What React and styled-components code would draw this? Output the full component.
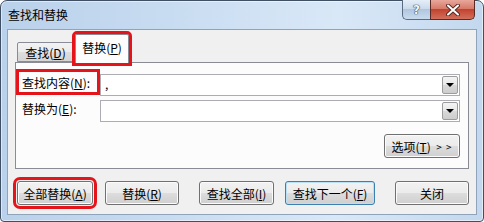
import React from "react";
import { styled, createGlobalStyle } from "styled-components";

const GlobalStyle = createGlobalStyle`
  html, body {
    margin: 0;
    width: 484px;
    height: 222px;
    overflow: hidden;
    background: #fff;
  }
  body {
    font-family: "Noto Sans CJK SC", "Microsoft YaHei", sans-serif;
    font-size: 12px;
    color: #000;
  }
  * { box-sizing: border-box; }
`;

export default function App() {
  return (
    <>
      <GlobalStyle />
      <Window>
        <TitleBar>
          <Title>查找和替换</Title>
          <Captions>
            <HelpButton>?</HelpButton>
            <CloseButton>
              <svg width="14" height="12" viewBox="0 0 14 12">
                <path d="M2 1.5 L12 10.5 M12 1.5 L2 10.5" stroke="#5a2a24" strokeWidth="4" strokeLinecap="round" />
                <path d="M2 1.5 L12 10.5 M12 1.5 L2 10.5" stroke="#fff" strokeWidth="2" strokeLinecap="round" />
              </svg>
            </CloseButton>
          </Captions>
        </TitleBar>

        <Client>
          <TabStrip>
            <Tab>查找(<u>D</u>)</Tab>
            <Tab $active $marked>替换(<u>P</u>)</Tab>
          </TabStrip>

          <Panel>
            <FieldRow>
              <Label $marked>查找内容(<u>N</u>):</Label>
              <Combo>
                <ComboText>,</ComboText>
                <DropButton><Arrow /></DropButton>
              </Combo>
            </FieldRow>
            <FieldRow>
              <Label>替换为(<u>E</u>):</Label>
              <Combo>
                <ComboText />
                <DropButton><Arrow /></DropButton>
              </Combo>
            </FieldRow>
            <OptionsRow>
              <Button $w={76}>选项(<u>T</u>)&nbsp;&nbsp;<Chevrons>&gt; &gt;</Chevrons></Button>
            </OptionsRow>
          </Panel>

          <ButtonRow>
            <Button $w={76} $ml={9} $marked>全部替换(<u>A</u>)</Button>
            <Button $w={74} $ml={12}>替换(<u>R</u>)</Button>
            <Button $w={75} $ml={20}>查找全部(<u>I</u>)</Button>
            <Button $w={90} $ml={11} $default>查找下一个(<u>F</u>)</Button>
            <Button $w={74} $ml={20}>关闭</Button>
          </ButtonRow>
        </Client>
      </Window>
    </>
  );
}

const mark = `
  outline: 3px solid #e5141b;
  outline-offset: 0;
`;

const Window = styled.div`
  width: 484px;
  height: 222px;
  display: flex;
  flex-direction: column;
  padding: 0 6px 6px 6px;
  border: 1px solid #3f5064;
  border-radius: 7px 7px 4px 4px;
  background: linear-gradient(90deg, #b9d1ea 0%, #c8dcf1 35%, #d9e8f7 70%, #c3d8ee 100%);
  box-shadow: inset 0 0 0 1px rgba(255, 255, 255, 0.5);
`;

const TitleBar = styled.div`
  height: 28px;
  display: flex;
  align-items: flex-start;
`;

const Title = styled.div`
  margin-top: 6px;
  padding-left: 1px;
  font-size: 12px;
  line-height: 16px;
  color: #000;
`;

const Captions = styled.div`
  margin-left: auto;
  margin-right: 2px;
  margin-top: -1px;
  display: flex;
`;

const HelpButton = styled.div`
  width: 28px;
  height: 20px;
  border: 1px solid #5b6c80;
  border-right: none;
  border-top: none;
  border-radius: 0 0 0 5px;
  background: linear-gradient(#e5eef8 0%, #cbdbec 45%, #b1c6dd 50%, #c9dbee 100%);
  display: flex;
  align-items: center;
  justify-content: center;
  font-family: "DejaVu Sans", sans-serif;
  font-size: 12px;
  font-weight: bold;
  color: #f4f7fb;
  text-shadow: 0 0 1px #34455a, 0 0 1px #34455a, 0 0 1px #34455a;
`;

const CloseButton = styled.div`
  width: 45px;
  height: 20px;
  border: 1px solid #5a2b26;
  border-top: none;
  border-radius: 0 0 5px 0;
  background: linear-gradient(#e8a89c 0%, #d77a69 45%, #c2432f 50%, #d2705b 100%);
  display: flex;
  align-items: center;
  justify-content: center;
`;

const Client = styled.div`
  flex: 1;
  display: flex;
  flex-direction: column;
  background: #f0f0f0;
  border: 1px solid #8fa3bb;
`;

const TabStrip = styled.div`
  height: 28px;
  margin-top: 4px;
  margin-left: 9px;
  display: flex;
  align-items: flex-end;
`;

const Tab = styled.div`
  position: relative;
  z-index: ${(p) => (p.$active ? 2 : 1)};
  height: ${(p) => (p.$active ? "29px" : "20px")};
  width: ${(p) => (p.$active ? "54px" : "57px")};
  margin-left: ${(p) => (p.$active ? "1px" : "0")};
  margin-bottom: ${(p) => (p.$active ? "-1px" : "0")};
  display: flex;
  align-items: center;
  justify-content: center;
  padding-bottom: ${(p) => (p.$active ? "3px" : "0")};
  border: 1px solid #898c95;
  border-bottom: ${(p) => (p.$active ? "none" : "1px solid #898c95")};
  border-radius: 2px 2px 0 0;
  background: ${(p) =>
    p.$active ? "#fcfcfc" : "linear-gradient(#f3f3f3 0%, #ebebeb 50%, #dedede 51%, #d5d5d5 100%)"};
  ${(p) => p.$marked && mark}
`;

const Panel = styled.div`
  position: relative;
  z-index: 1;
  width: 454px;
  height: 107px;
  margin-left: 7px;
  padding: 11px 7px 0 3px;
  border: 1px solid #898c95;
  background: #fcfcfc;
  display: flex;
  flex-direction: column;
  gap: 4px;
`;

const FieldRow = styled.div`
  height: 22px;
  display: flex;
  align-items: center;
`;

const Label = styled.div`
  width: 78px;
  height: 20px;
  align-self: flex-start;
  margin-top: -2px;
  padding-left: 3px;
  display: flex;
  align-items: center;
  white-space: nowrap;
  ${(p) => p.$marked && mark}
`;

const Combo = styled.div`
  margin-left: 3px;
  width: 360px;
  height: 22px;
  border: 1px solid #abadb3;
  background: #fff;
  display: flex;
  align-items: stretch;
`;

const ComboText = styled.div`
  flex: 1;
  padding-left: 4px;
  line-height: 18px;
`;

const DropButton = styled.div`
  width: 16px;
  margin: 1px;
  border: 1px solid #9c9c9c;
  border-radius: 2px;
  background: linear-gradient(#f4f4f4 0%, #e8e8e8 50%, #d9d9d9 51%, #cdcdcd 100%);
  display: flex;
  align-items: center;
  justify-content: center;
`;

const Arrow = styled.span`
  width: 0;
  height: 0;
  border-left: 4px solid transparent;
  border-right: 4px solid transparent;
  border-top: 4px solid #000;
`;

const OptionsRow = styled.div`
  margin-top: 8px;
  margin-right: 1px;
  display: flex;
  justify-content: flex-end;
`;

const Chevrons = styled.span`
  font-size: 10px;
  letter-spacing: 1px;
`;

const ButtonRow = styled.div`
  margin-top: 12px;
  display: flex;
`;

const Button = styled.div`
  width: ${(p) => p.$w}px;
  height: ${(p) => (p.$h ? p.$h : 24)}px;
  margin-left: ${(p) => p.$ml || 0}px;
  display: flex;
  align-items: center;
  justify-content: center;
  white-space: nowrap;
  border: 1px solid ${(p) => (p.$default ? "#3c7fb1" : "#707070")};
  border-radius: 3px;
  background: linear-gradient(#f2f2f2 0%, #ebebeb 50%, #dddddd 51%, #cfcfcf 100%);
  box-shadow: inset 0 0 0 1px ${(p) => (p.$default ? "#b9e0f5" : "#fbfbfb")};
  ${(p) => p.$marked && `outline: 3px solid #e5141b; outline-offset: 1px;`}
`;
